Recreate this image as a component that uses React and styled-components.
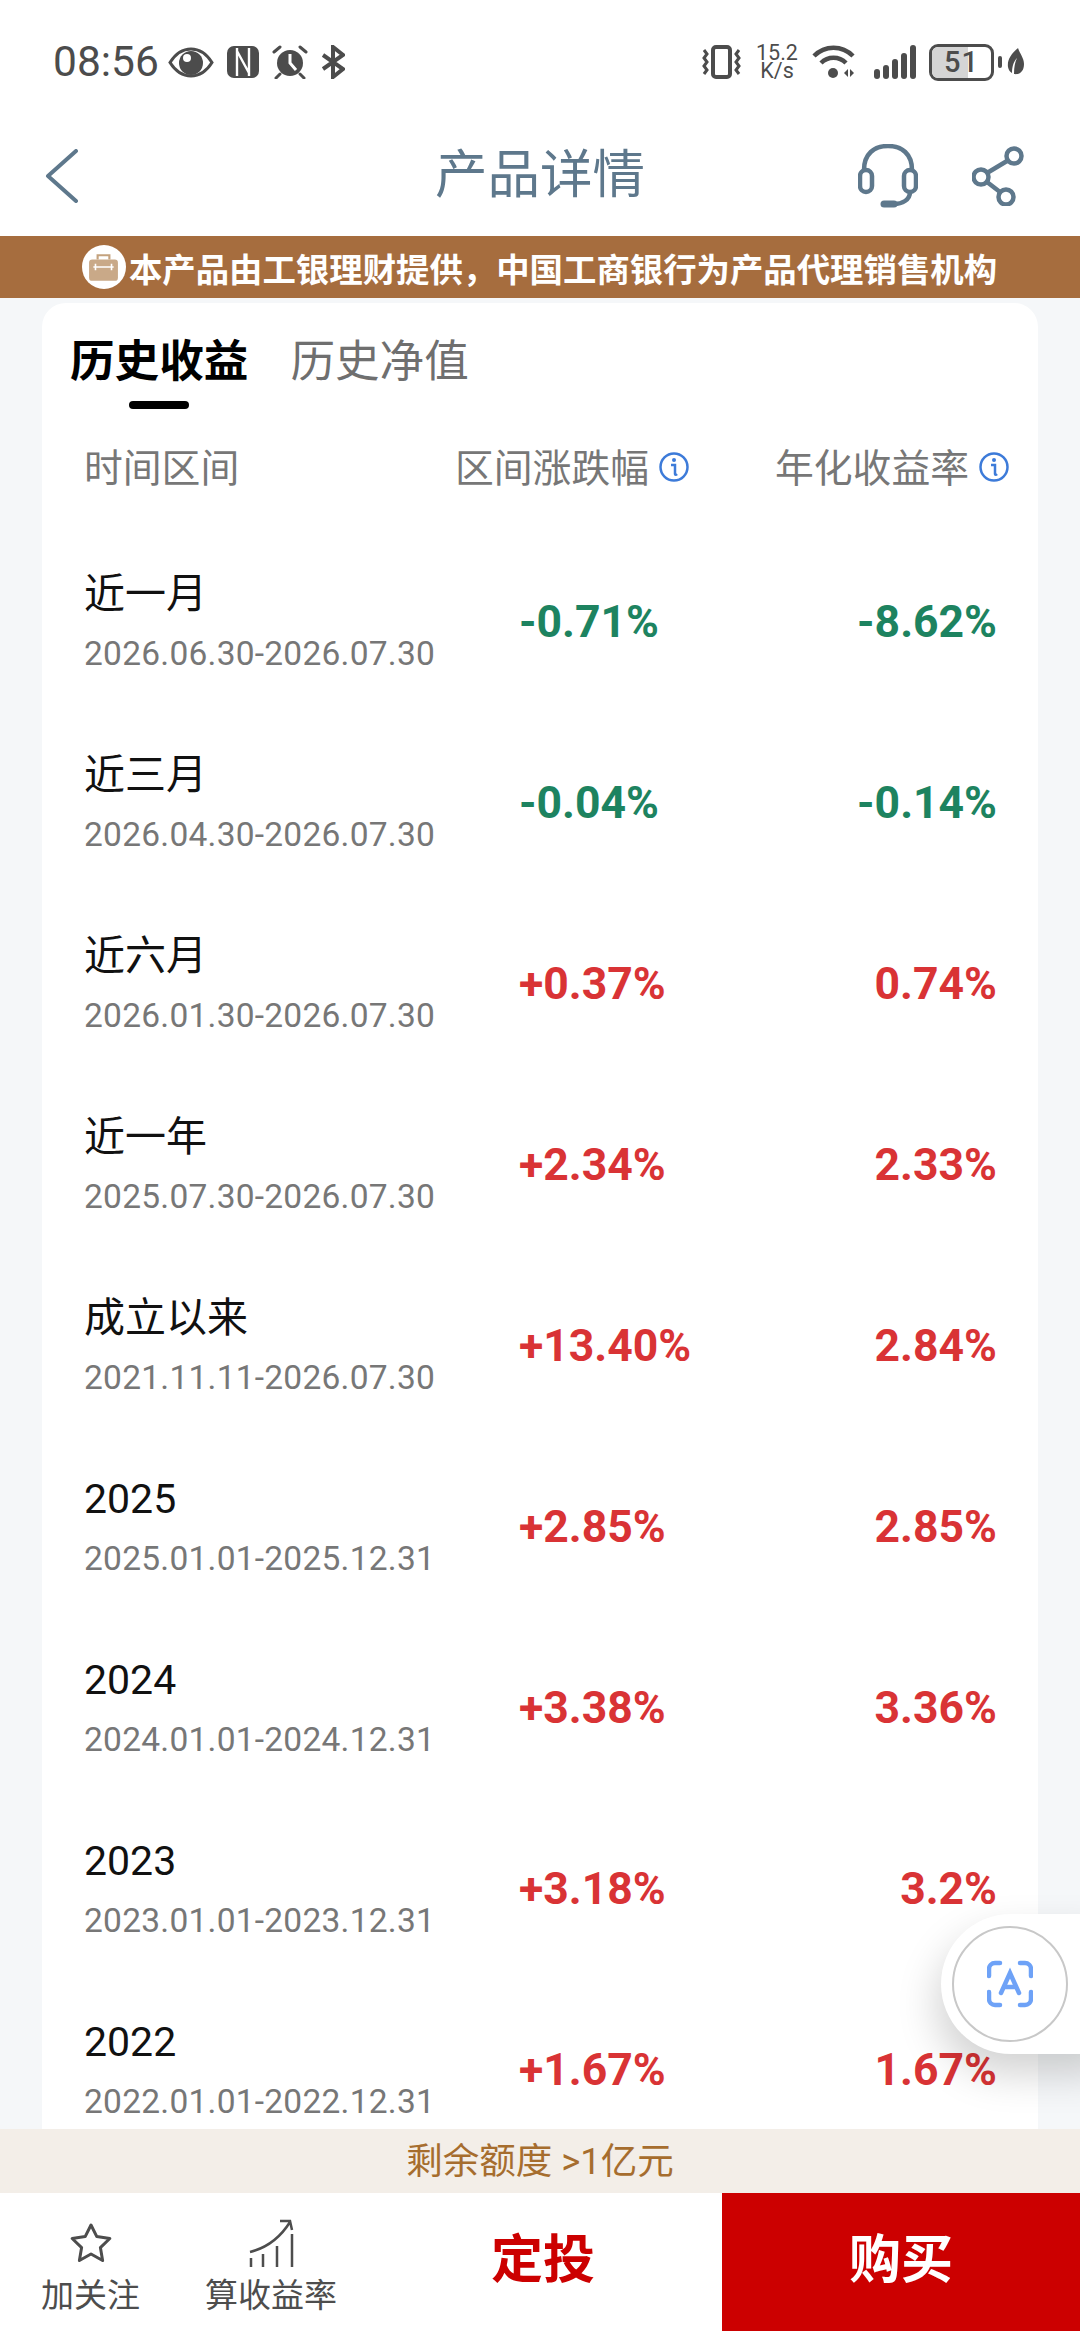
import React from "react";
import styled, { createGlobalStyle } from "styled-components";

const Global = createGlobalStyle`
  html, body { margin: 0; padding: 0; background: #f5f7f9; }
  * { box-sizing: border-box; }
`;
const FONT = `Roboto, "Noto Sans CJK SC", sans-serif`;

const Page = styled.div`
  position: relative; width: 1080px; height: 2331px; overflow: hidden;
  display: flex; flex-direction: column; background: #f5f7f9; font-family: ${FONT};
`;
const StatusBar = styled.div`
  height: 118px; background: #fff; display: flex; align-items: flex-start; justify-content: space-between;
  padding: 42px 55px 0 53px; color: #4c4c4c;
`;
const StatusGroup = styled.div`display: flex; align-items: center; gap: ${p => p.$gap}px; height: 40px;`;
const Clock = styled.span`font-size: 42.5px; line-height: 40px; margin-right: -4px;`;
const Speed = styled.span`font-size: 21.5px; line-height: 18.5px; text-align: center; display: block; width: 44px;`;
const SignalSlot = styled.div`display: flex; margin-left: 6px;`;
const BatteryWrap = styled.div`
  position: relative; display: flex;
  &::after { content: ""; position: absolute; right: -8px; top: 12px; width: 4px; height: 12px; border-radius: 2px; background: #4c4c4c; }
`;
const Battery = styled.div`
  position: relative; width: 65px; height: 37px; border: 3px solid #4c4c4c; border-radius: 9px; overflow: hidden;
  display: flex; align-items: center; justify-content: center; font-size: 29px; font-weight: 500;
`;
const BatteryFill = styled.div`position: absolute; left: 0; top: 0; bottom: 0; width: 61%; background: #d5d5d5;`;
const BatteryText = styled.span`position: relative; line-height: 30px; letter-spacing: 1px;`;
const Header = styled.div`
  height: 118px; background: #fff; display: flex; align-items: center; justify-content: space-between;
  padding: 0 56px 2px 44px; position: relative;
`;
const Title = styled.div`
  position: absolute; left: 0; right: 0; top: 0; text-align: center; font-size: 52.5px; line-height: 114px; color: #5e788c;
`;
const HeaderIcons = styled.div`display: flex; align-items: center; gap: 54px;`;
const Banner = styled.div`
  height: 62px; background: #a66d3e; color: #fff; display: flex; align-items: center; justify-content: center;
  gap: 3px; font-size: 33.4px; font-weight: 700; padding-right: 1px;
`;
const BannerBadge = styled.div`
  width: 44px; height: 44px; border-radius: 50%; background: #fff; display: flex; align-items: center; justify-content: center;
`;
const Card = styled.div`
  flex: 1; min-height: 0; margin: 5px 42px 0; background: #fff; border-radius: 24px 24px 0 0; overflow: hidden;
`;
const Tabs = styled.div`display: flex; gap: 42px; padding: 34px 0 0 28px;`;
const Tab = styled.div`
  position: relative; font-size: 44.6px; line-height: 50px; height: 71px;
  font-weight: ${p => (p.$active ? 700 : 400)}; color: ${p => (p.$active ? "#000" : "#6f6f6f")};
  ${p => p.$active && `&::after{content:"";position:absolute;left:59px;bottom:-1px;width:60px;height:8px;border-radius:4px;background:#000;}`}
`;
const HeadRow = styled.div`
  display: flex; align-items: center; height: 40px; margin-top: 37px; padding: 0 29px 0 42px;
  font-size: 38.8px; color: #777;
`;
const HeadFirst = styled.div`flex: 1;`;
const HeadCell = styled.div`display: flex; align-items: center; gap: 10px; width: ${p => p.$w}px; justify-content: flex-end;`;
const Rows = styled.div`padding: 46px 41px 0 42px;`;
const Row = styled.div`display: flex; align-items: center; height: 181px;`;
const RowLabel = styled.div`flex: 1; min-width: 0;`;
const RowName = styled.div`font-size: 41px; line-height: 50px; color: #111;`;
const RowDate = styled.div`font-size: 33.5px; line-height: 40px; margin-top: 15px; color: #777; letter-spacing: 0.25px;`;
const Delta = styled.div`
  width: 328px; font-size: 44.5px; font-weight: 700; color: ${p => (p.$up ? "#d93335" : "#1d8360")};
`;
const Rate = styled.div`
  width: 150px; text-align: right; white-space: nowrap; font-size: 44.5px; font-weight: 700; color: ${p => (p.$up ? "#d93335" : "#1d8360")};
`;
const Quota = styled.div`
  height: 64px; padding-bottom: 5px; background: #f3eee8; color: #a66d2e; font-size: 36.5px; display: flex; align-items: center; justify-content: center;
`;
const Footer = styled.div`height: 138px; background: #fff; display: flex; align-items: stretch;`;
const FootTools = styled.div`display: flex; width: 364px; padding: 26px 0 0 41px; gap: 65px;`;
const Tool = styled.div`display: flex; flex-direction: column; align-items: center; color: #4d4d4d; font-size: 33px; line-height: 40px;`;
const ToolIcon = styled.div`height: 48px; display: flex; align-items: center; justify-content: center; margin-bottom: 9px;`;
const PlanBtn = styled.div`
  width: 358px; padding-bottom: 14px; display: flex; align-items: center; justify-content: center; color: #cc0000; font-size: 52px; font-weight: 700;
`;
const BuyBtn = styled.div`
  flex: 1; padding-bottom: 14px; background: #cc0000; color: #fff; display: flex; align-items: center; justify-content: center; font-size: 52px; font-weight: 700;
`;
const Floater = styled.div`
  position: absolute; left: 941px; top: 1914px; width: 170px; height: 140px; border-radius: 70px 0 0 70px; background: #fff;
  box-shadow: -4px 20px 40px rgba(0,0,0,.18); padding: 12px 0 0 11px;
`;
const FloaterRing = styled.div`
  width: 116px; height: 116px; border: 2px solid #c8c8c8; border-radius: 50%; background: #fff;
  display: flex; align-items: center; justify-content: center;
`;

const Eye = () => (
  <svg width="46" height="31" viewBox="0 0 46 31"><path d="M2 15.5C8 6 15 2 23 2s15 4 21 13.5C38 25 31 29 23 29S8 25 2 15.5Z" fill="none" stroke="#4c4c4c" strokeWidth="3"/><circle cx="23" cy="16" r="12" fill="#4c4c4c"/><circle cx="19" cy="11" r="4" fill="#fff"/></svg>
);
const Nfc = () => (
  <svg width="32" height="32" viewBox="0 0 32 32"><rect width="32" height="32" rx="7" fill="#4c4c4c"/><path d="M10 2v28M10 5l12 22M22 2v28" fill="none" stroke="#fff" strokeWidth="2.4"/></svg>
);
const Alarm = () => (
  <svg width="36" height="34" viewBox="0 0 36 34"><circle cx="18" cy="18" r="13" fill="#4c4c4c"/><path d="M18 9v9l6 7" fill="none" stroke="#fff" strokeWidth="3"/><path d="M2 7 8 2M34 7l-6-5M8 29l-4 4M28 29l4 4" stroke="#4c4c4c" strokeWidth="3" strokeLinecap="round"/></svg>
);
const Bluetooth = () => (
  <svg width="24" height="34" viewBox="0 0 24 34"><path d="M2 10 22 24 12 32V2l10 8L2 24" fill="none" stroke="#4c4c4c" strokeWidth="4"/></svg>
);
const Vibrate = () => (
  <svg width="41" height="34" viewBox="0 0 41 34"><rect x="12" y="2" width="17" height="30" rx="3" fill="none" stroke="#4c4c4c" strokeWidth="4"/><path d="M3 5l3 4-3 4 3 4-3 4 3 4-3 4M38 5l-3 4 3 4-3 4 3 4-3 4 3 4" fill="none" stroke="#4c4c4c" strokeWidth="3"/></svg>
);
const Wifi = () => (
  <svg width="43" height="34" viewBox="0 0 43 34"><path d="M2 11C13 0 30 0 41 11M9 18c7-7 18-7 25 0" fill="none" stroke="#4c4c4c" strokeWidth="4.5"/><circle cx="21" cy="28" r="5" fill="#4c4c4c"/><path d="M32 28l4-4v8zM42 28l-4-4v8z" fill="#4c4c4c"/></svg>
);
const Signal = () => (
  <svg width="42" height="34" viewBox="0 0 42 34" fill="#4c4c4c"><rect x="0" y="24" width="6" height="10" rx="3"/><rect x="9" y="20" width="6" height="14" rx="3"/><rect x="18" y="14" width="6" height="20" rx="3"/><rect x="27" y="8" width="6" height="26" rx="3"/><rect x="36" y="0" width="6" height="34" rx="3"/></svg>
);
const Leaf = () => (
  <svg width="18" height="28" viewBox="0 0 18 28"><path d="M11 0C4 6 0 12 1 19c.5 3 2 5 4 6 0-7 2-12 5-15-2 4-3 9-3 16 6 1 10-3 10-10C17 10 13 6 11 0Z" fill="#4c4c4c"/></svg>
);
const Back = () => (
  <svg width="36" height="54" viewBox="0 0 36 54"><path d="M32 2 4 27l28 25" fill="none" stroke="#5e788c" strokeWidth="4" strokeLinecap="round" strokeLinejoin="round"/></svg>
);
const Headset = () => (
  <svg width="60" height="64" viewBox="0 0 60 64" fill="none" stroke="#5e788c" strokeWidth="4.5"><path d="M6 26C6 10 16 2 30 2s24 8 24 24"/><rect x="2" y="26" width="12" height="22" rx="6"/><rect x="46" y="26" width="12" height="22" rx="6"/><path d="M52 48c0 8-8 12-16 12" /><path d="M26 60h10" strokeWidth="7" strokeLinecap="round"/></svg>
);
const Share = () => (
  <svg width="52" height="60" viewBox="0 0 52 60" fill="none" stroke="#5e788c" strokeWidth="4.5"><circle cx="42" cy="10" r="7.5"/><circle cx="9" cy="31" r="7.5"/><circle cx="34" cy="51" r="7.5"/><path d="M35 15 15 27M15 36l13 10"/></svg>
);
const Briefcase = () => (
  <svg width="31" height="31" viewBox="0 0 29 29"><path d="M9 7V3h11v4" fill="none" stroke="#c4a27e" strokeWidth="2"/><rect x="1" y="7" width="27" height="20" rx="3" fill="#c9a988"/><path d="M5 14h19M7 11v6M22 11v6" stroke="#fff" strokeWidth="1.5"/></svg>
);
const InfoSvg = styled.svg`margin-top: 4px;`;
const Info = () => (
  <InfoSvg width="30" height="32" viewBox="0 0 30 32"><circle cx="15" cy="16" r="13.5" fill="none" stroke="#3d7bd9" strokeWidth="2.5"/><circle cx="15" cy="9" r="2" fill="#3d7bd9"/><path d="M12 14h4v9c0 1 1 1 2 0" fill="none" stroke="#3d7bd9" strokeWidth="2.5"/></InfoSvg>
);
const Star = () => (
  <svg width="42" height="40" viewBox="0 0 42 40"><path d="M21 2l5.8 11.6 13 1.9-9.4 9.1 2.2 12.9L21 31l-11.6 6.5 2.2-12.9-9.4-9.1 13-1.9Z" fill="none" stroke="#4d4d4d" strokeWidth="3" strokeLinejoin="round"/></svg>
);
const Growth = () => (
  <svg width="46" height="50" viewBox="0 0 46 50" fill="none" stroke="#4d4d4d" strokeWidth="2.5"><path d="M2 34C18 30 32 20 42 4M32 3l10 0 2 9"/><path d="M3 40v9M15 36v13M29 28v21M44 16v33"/></svg>
);
const ScanA = () => (
  <svg width="46" height="48" viewBox="0 0 46 48" fill="none" stroke="#6ea2f7" strokeWidth="4.5" strokeLinecap="round"><path d="M2 16V9a6 6 0 0 1 6-6h5M33 3h5a6 6 0 0 1 6 6v7M44 32v7a6 6 0 0 1-6 6h-5M13 45H8a6 6 0 0 1-6-6v-7"/><path d="M14 33 23 13l9 20M17 27h12" strokeWidth="4.5"/></svg>
);

const rows = [
  ["近一月", "2026.06.30-2026.07.30", "-0.71%", "-8.62%", false],
  ["近三月", "2026.04.30-2026.07.30", "-0.04%", "-0.14%", false],
  ["近六月", "2026.01.30-2026.07.30", "+0.37%", "0.74%", true],
  ["近一年", "2025.07.30-2026.07.30", "+2.34%", "2.33%", true],
  ["成立以来", "2021.11.11-2026.07.30", "+13.40%", "2.84%", true],
  ["2025", "2025.01.01-2025.12.31", "+2.85%", "2.85%", true],
  ["2024", "2024.01.01-2024.12.31", "+3.38%", "3.36%", true],
  ["2023", "2023.01.01-2023.12.31", "+3.18%", "3.2%", true],
  ["2022", "2022.01.01-2022.12.31", "+1.67%", "1.67%", true],
];

export default function App() {
  return (
    <Page>
      <Global />
      <StatusBar>
        <StatusGroup $gap={13}>
          <Clock>08:56</Clock>
          <Eye /><Nfc /><Alarm /><Bluetooth />
        </StatusGroup>
        <StatusGroup $gap={13}>
          <Vibrate /><Speed>15.2<br />K/s</Speed><Wifi />
          <SignalSlot><Signal /></SignalSlot>
          <BatteryWrap><Battery><BatteryFill /><BatteryText>51</BatteryText></Battery></BatteryWrap>
          <Leaf />
        </StatusGroup>
      </StatusBar>
      <Header>
        <Back />
        <Title>产品详情</Title>
        <HeaderIcons><Headset /><Share /></HeaderIcons>
      </Header>
      <Banner><BannerBadge><Briefcase /></BannerBadge>本产品由工银理财提供，中国工商银行为产品代理销售机构</Banner>
      <Card>
        <Tabs>
          <Tab $active>历史收益</Tab>
          <Tab>历史净值</Tab>
        </Tabs>
        <HeadRow>
          <HeadFirst>时间区间</HeadFirst>
          <HeadCell $w={240}>区间涨跌幅<Info /></HeadCell>
          <HeadCell $w={320}>年化收益率<Info /></HeadCell>
        </HeadRow>
        <Rows>
          {rows.map(r => (
            <Row key={r[0]}>
              <RowLabel><RowName>{r[0]}</RowName><RowDate>{r[1]}</RowDate></RowLabel>
              <Delta $up={r[4]}>{r[2]}</Delta>
              <Rate $up={r[4]}>{r[3]}</Rate>
            </Row>
          ))}
        </Rows>
      </Card>
      <Quota>剩余额度 &gt;1亿元</Quota>
      <Footer>
        <FootTools>
          <Tool><ToolIcon><Star /></ToolIcon>加关注</Tool>
          <Tool><ToolIcon><Growth /></ToolIcon>算收益率</Tool>
        </FootTools>
        <PlanBtn>定投</PlanBtn>
        <BuyBtn>购买</BuyBtn>
      </Footer>
      <Floater><FloaterRing><ScanA /></FloaterRing></Floater>
    </Page>
  );
}
